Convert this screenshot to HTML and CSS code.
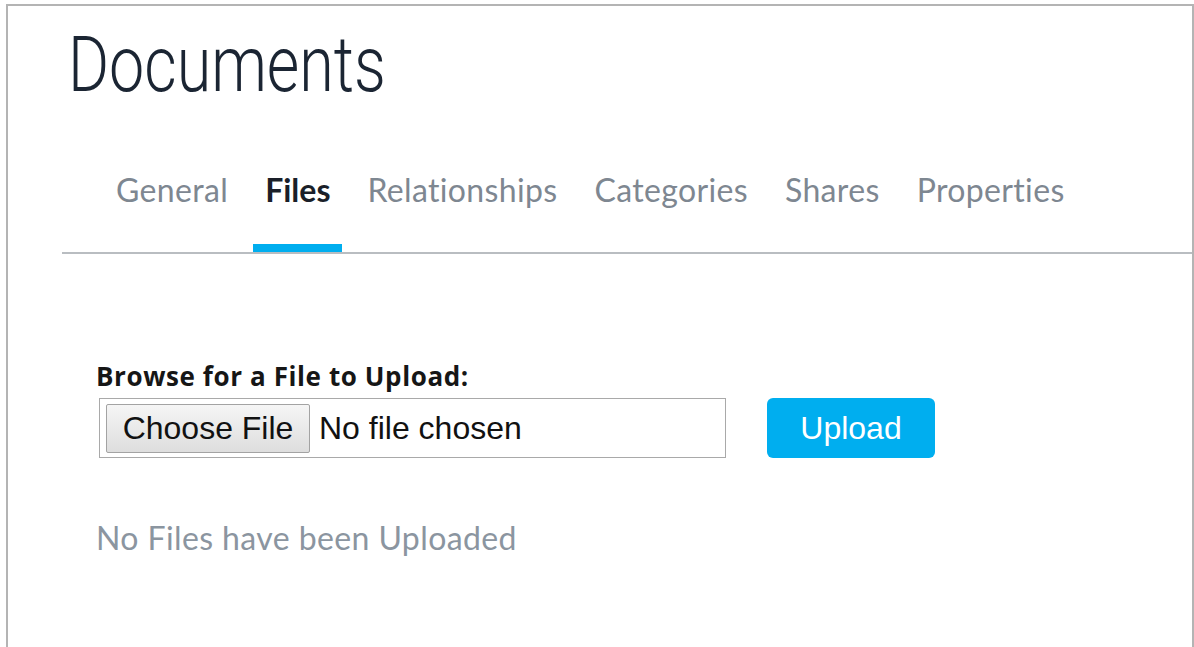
FILE: index.html
```html
<!DOCTYPE html>
<html lang="en">
<head>
<meta charset="utf-8">
<title>Documents</title>
<link rel="stylesheet" href="styles.css">
</head>
<body>
<div class="frame">
  <main class="page">
    <h1 class="page-title"><span>Documents</span></h1>

    <nav class="tabs">
      <a class="tab" href="#">General</a>
      <a class="tab active" href="#">Files</a>
      <a class="tab" href="#">Relationships</a>
      <a class="tab" href="#">Categories</a>
      <a class="tab" href="#">Shares</a>
      <a class="tab" href="#">Properties</a>
    </nav>

    <section class="upload">
      <label class="upload-label">Browse for a File to Upload:</label>
      <div class="upload-row">
        <div class="file-field">
          <button class="choose-btn" type="button">Choose File</button>
          <span class="file-name">No file chosen</span>
        </div>
        <button class="upload-btn" type="button">Upload</button>
      </div>
      <p class="empty-note">No Files have been Uploaded</p>
    </section>
  </main>
</div>
</body>
</html>
```

FILE: styles.css
```css
html, body {
  margin: 0;
  padding: 0;
  background: #ffffff;
  overflow: hidden;
}

body {
  font-family: "Lato", "Open Sans", sans-serif;
}

.frame {
  margin: 4px 0 0 6px;
  height: calc(100vh - 4px);
  border: 2px solid #b4b4b4;
  border-bottom: none;
  box-sizing: border-box;
}

.page {
  padding-left: 54px;
}

/* Heading */
.page-title {
  margin: 21px 0 0;
  padding-left: 6px;
  font-family: "Roboto", sans-serif;
  font-weight: 300;
  font-size: 77px;
  line-height: 77px;
  height: 77px;
  color: #1b2533;
  white-space: nowrap;
}

.page-title span {
  display: inline-block;
  transform: scaleX(0.815);
  transform-origin: left center;
}

/* Tabs */
.tabs {
  display: flex;
  gap: 13px;
  margin-top: 66px;
  padding-left: 42px;
  border-bottom: 2px solid #b9bdc1;
}

.tab {
  display: block;
  padding: 0 12px 34px;
  border-bottom: 8px solid transparent;
  font-size: 32px;
  line-height: 40px;
  letter-spacing: 0.35px;
  color: #7e8791;
  text-decoration: none;
}

.tab.active {
  border-bottom-color: #00aeef;
  color: #1a1f29;
  font-weight: 700;
  letter-spacing: 0;
}

/* Upload form */
.upload {
  padding: 107px 0 0 34px;
}

.upload-label {
  display: block;
  margin-bottom: 7px;
  font-family: "Open Sans", sans-serif;
  font-size: 26px;
  line-height: 30px;
  font-weight: 700;
  letter-spacing: 0.6px;
  color: #161616;
}

.upload-row {
  display: flex;
  align-items: center;
  gap: 41px;
  margin-left: 3px;
}

.file-field {
  display: flex;
  align-items: center;
  width: 627px;
  height: 60px;
  box-sizing: border-box;
  padding: 0 0 0 6px;
  border: 1px solid #a9a9a9;
  background: #ffffff;
}

.choose-btn {
  width: 204px;
  height: 49px;
  padding: 0;
  border: 1px solid #a3a3a3;
  border-radius: 2px;
  background: linear-gradient(#f5f5f5, #dedede);
  font-family: "Liberation Sans", Arial, sans-serif;
  font-size: 32px;
  color: #111111;
}

.file-name {
  margin-left: 9px;
  font-family: "Liberation Sans", Arial, sans-serif;
  font-size: 32px;
  color: #111111;
}

.upload-btn {
  width: 168px;
  height: 60px;
  padding: 0;
  border: none;
  border-radius: 6px;
  background: #00aeef;
  font-family: "Liberation Sans", Arial, sans-serif;
  font-size: 32px;
  color: #ffffff;
}

.empty-note {
  margin: 60px 0 0;
  font-size: 32px;
  line-height: 40px;
  letter-spacing: 0.4px;
  color: #8b95a0;
}
```
